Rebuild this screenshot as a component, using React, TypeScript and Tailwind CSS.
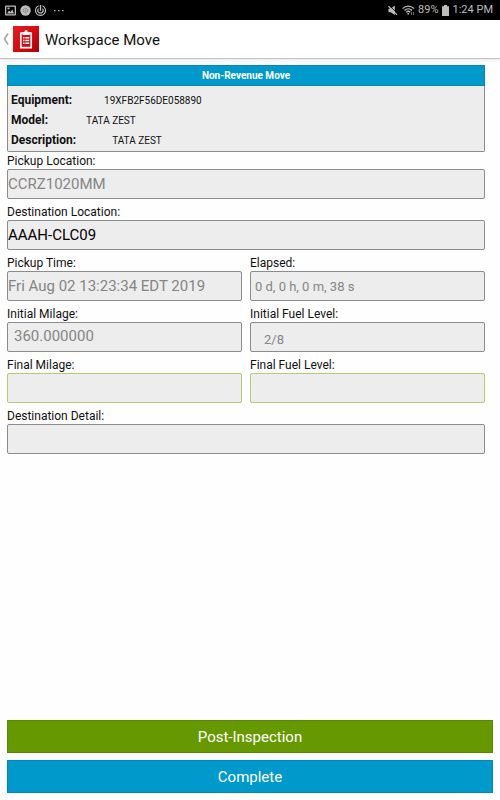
import { useId } from "react";

const font = "font-['Roboto','Noto_Sans',sans-serif]";

const vehicle = [
  { name: "Equipment:", value: "19XFB2F56DE058890", gap: "gap-8" },
  { name: "Model:", value: "TATA ZEST", gap: "gap-[38px]" },
  { name: "Description:", value: "TATA ZEST", gap: "gap-9" },
];

type FieldProps = {
  label: string;
  value?: string;
  disabled?: boolean;
  look?: string;
  border?: string;
};

function Field({
  label,
  value = "",
  disabled = false,
  look = "text-[15px]",
  border = "border-[#8c8c8c]",
}: FieldProps) {
  const id = useId();
  return (
    <div className="min-w-0 flex-1">
      <label htmlFor={id} className="block h-[17px] text-[12px] leading-[19px] text-[#111]">
        {label}
      </label>
      <input
        id={id}
        type="text"
        defaultValue={value}
        disabled={disabled}
        className={`block h-[30px] w-full rounded-xs border bg-[#ededed] outline-none disabled:text-[#858585] ${border} ${look}`}
      />
    </div>
  );
}

function StatusBar() {
  return (
    <div className="flex h-5 items-center justify-between bg-black pr-[7px] pl-[5px] text-[#bdbdbd]">
      <div className="flex items-center gap-1">
        <svg className="size-[11px]" viewBox="0 0 11 11" aria-hidden="true">
          <path
            fill="currentColor"
            fillRule="evenodd"
            d="M1 .5h9a1 1 0 0 1 1 1v8a1 1 0 0 1-1 1H1a1 1 0 0 1-1-1v-8a1 1 0 0 1 1-1ZM1.3 1.8v7.4h8.4V1.8ZM2 8.5l2-3 1.5 1.6L7.3 4.5 9 8.5ZM2.5 2.6h2v1.6h-2Z"
          />
        </svg>
        <svg className="size-[11px]" viewBox="0 0 11 11" aria-hidden="true">
          <circle cx="5.500" cy="5.500" r="5.200" fill="currentColor" />
          <circle cx="5.500" cy="5.500" r="2.300" fill="none" stroke="#777" strokeWidth="1" strokeDasharray="1.600 .8" />
          <circle cx="5.500" cy="5.500" r=".9" fill="#888" />
        </svg>
        <svg className="size-[11px]" viewBox="0 0 11 11" fill="none" stroke="currentColor" aria-hidden="true">
          <path strokeWidth="1.100" d="M3.600.8a5 5 0 1 0 3.800 0" />
          <path strokeWidth="1.100" d="M3.500 3.500a2.700 2.700 0 1 0 4 0" />
          <path strokeWidth="1.400" d="M5.500 0v5.800" />
        </svg>
        <svg className="ml-1 h-[11px] w-[10px]" viewBox="0 0 10 11" fill="currentColor" aria-hidden="true">
          <path d="M0 5h1.500v1.300H0ZM4 5h1.500v1.300H4ZM8 5h1.500v1.300H8Z" />
        </svg>
      </div>
      <div className="flex items-center">
        <svg className="h-[11px] w-[10px]" viewBox="0 0 11 11" aria-hidden="true">
          <path fill="currentColor" d="M.5 3.500h2.500L7.500 0v10.500L3 7.500H.5Z" />
          <path stroke="#000" strokeWidth="1" d="M1.500 0l9.500 9.500" />
          <path stroke="currentColor" strokeWidth="1.300" d="M.5.8l9.500 9.500" />
        </svg>
        <svg className="mr-[3px] ml-1 h-[11px] w-[13px]" viewBox="0 0 13 11" fill="none" stroke="currentColor" aria-hidden="true">
          <path strokeWidth="1.300" d="M.6 3.600c3.200-3.300 8.200-3.300 11.400 0M2.500 5.500c2.200-2.200 5.400-2.200 7.600 0M4.300 7.300c1.200-1.200 2.800-1.200 4 0" />
          <path strokeWidth="1.500" d="M6.200 8v1.500" />
          <path stroke="#666" strokeWidth="1" d="M9.500 7v3M11.500 7v3" />
        </svg>
        <span className="pt-px text-[11px]">89%</span>
        <svg className="mr-1 ml-[3px] h-[11px] w-[7px]" viewBox="0 0 7 11" fill="currentColor" aria-hidden="true">
          <path d="M2 0h3v1.200h2V11H0V1.200h2Z" />
        </svg>
        <span className="pt-px text-[11px]">1:24 PM</span>
      </div>
    </div>
  );
}

function Header() {
  return (
    <header className="flex h-[39px] items-center border-b border-[#c4c4c4] bg-white pl-[3px] shadow-[0_1px_3px_#0000001a]">
      <button type="button" aria-label="Back" className="mr-[3px] flex h-7 w-[7px] items-center">
        <svg className="h-3 w-[6px]" viewBox="0 0 6 12" fill="none" stroke="#a9a9a9" strokeWidth="1.700" aria-hidden="true">
          <path d="M5 .5 1.500 6 5 11.500" />
        </svg>
      </button>
      <svg className="size-[26px]" viewBox="0 0 26 26" aria-hidden="true">
        <defs>
          <linearGradient id="tile" x1="0" y1="0" x2="1" y2="1">
            <stop offset="0" stopColor="#e51c20" />
            <stop offset=".5" stopColor="#d90a10" />
            <stop offset="1" stopColor="#a80309" />
          </linearGradient>
        </defs>
        <path fill="url(#tile)" d="M0 0h26v26H0Z" />
        <path fill="none" stroke="#fff" strokeWidth="1.700" strokeLinejoin="round" d="M7.800 7h10.400v14.700H7.800Z" />
        <path fill="#fff" d="M9.500 9V6.200h2V5.500a1.600 1.600 0 0 1 3.200 0v.7h2V9Z" />
        <path stroke="#fff" strokeWidth="1.400" d="M10 11.700h1.500M12.300 11.700h4M10 14.500h1.500M12.300 14.500h4M10 17.300h1.500M12.300 17.300h4" />
      </svg>
      <h1 className="ml-[6px] pt-[2px] text-[15px] text-[#111]">Workspace Move</h1>
    </header>
  );
}

export default function App() {
  return (
    <div className={`flex min-h-screen flex-col bg-[#fefefe] ${font}`}>
      <StatusBar />
      <Header />
      <main className="flex flex-1 flex-col px-[7px] pt-[6px] pb-[7px]">
        <form id="move" className="mr-2 flex flex-col gap-1" onSubmit={(e) => e.preventDefault()}>
          <section className="-mb-1 rounded-b-xs border border-t-0 border-[#8c8c8c] bg-[#ededed]">
            <h2 className="-mx-px h-[21px] border border-[#0787b5] bg-[#0099cc] text-center text-[10px] leading-[19px] font-bold text-white">
              Non-Revenue Move
            </h2>
            <dl className="px-[3px] pt-1 pb-px text-[#111]">
              {vehicle.map((row) => (
                <div key={row.name} className={`flex h-5 items-center ${row.gap}`}>
                  <dt className="text-[12px] font-bold">{row.name}</dt>
                  <dd className="text-[10px]">{row.value}</dd>
                </div>
              ))}
            </dl>
          </section>
          <Field label="Pickup Location:" value="CCRZ1020MM" disabled />
          <Field label="Destination Location:" value="AAAH-CLC09" look="text-[15px] text-black" />
          <div className="flex gap-2">
            <Field label="Pickup Time:" value="Fri Aug 02 13:23:34 EDT 2019" disabled />
            <Field label="Elapsed:" value="0 d, 0 h, 0 m, 38 s" disabled look="pl-1 text-[13px]" />
          </div>
          <div className="flex gap-2">
            <Field label="Initial Milage:" value="360.000000" disabled look="pb-[2px] pl-[6px] text-[15px]" />
            <Field label="Initial Fuel Level:" value="2/8" disabled look="pt-1 pl-[13px] text-[13px]" />
          </div>
          <div className="flex gap-2">
            <Field label="Final Milage:" border="border-[#b5cc70]" />
            <Field label="Final Fuel Level:" border="border-[#b5cc70]" />
          </div>
          <Field label="Destination Detail:" />
        </form>
        <div className="mt-auto flex flex-col gap-[7px] text-[15px] text-white">
          <button type="button" className="h-[33px] border border-[#5a8605] bg-[#669900] pt-[2px]">
            Post-Inspection
          </button>
          <button type="submit" form="move" className="h-[33px] border border-[#0787b5] bg-[#0099cc] pt-[2px]">
            Complete
          </button>
        </div>
      </main>
    </div>
  );
}
